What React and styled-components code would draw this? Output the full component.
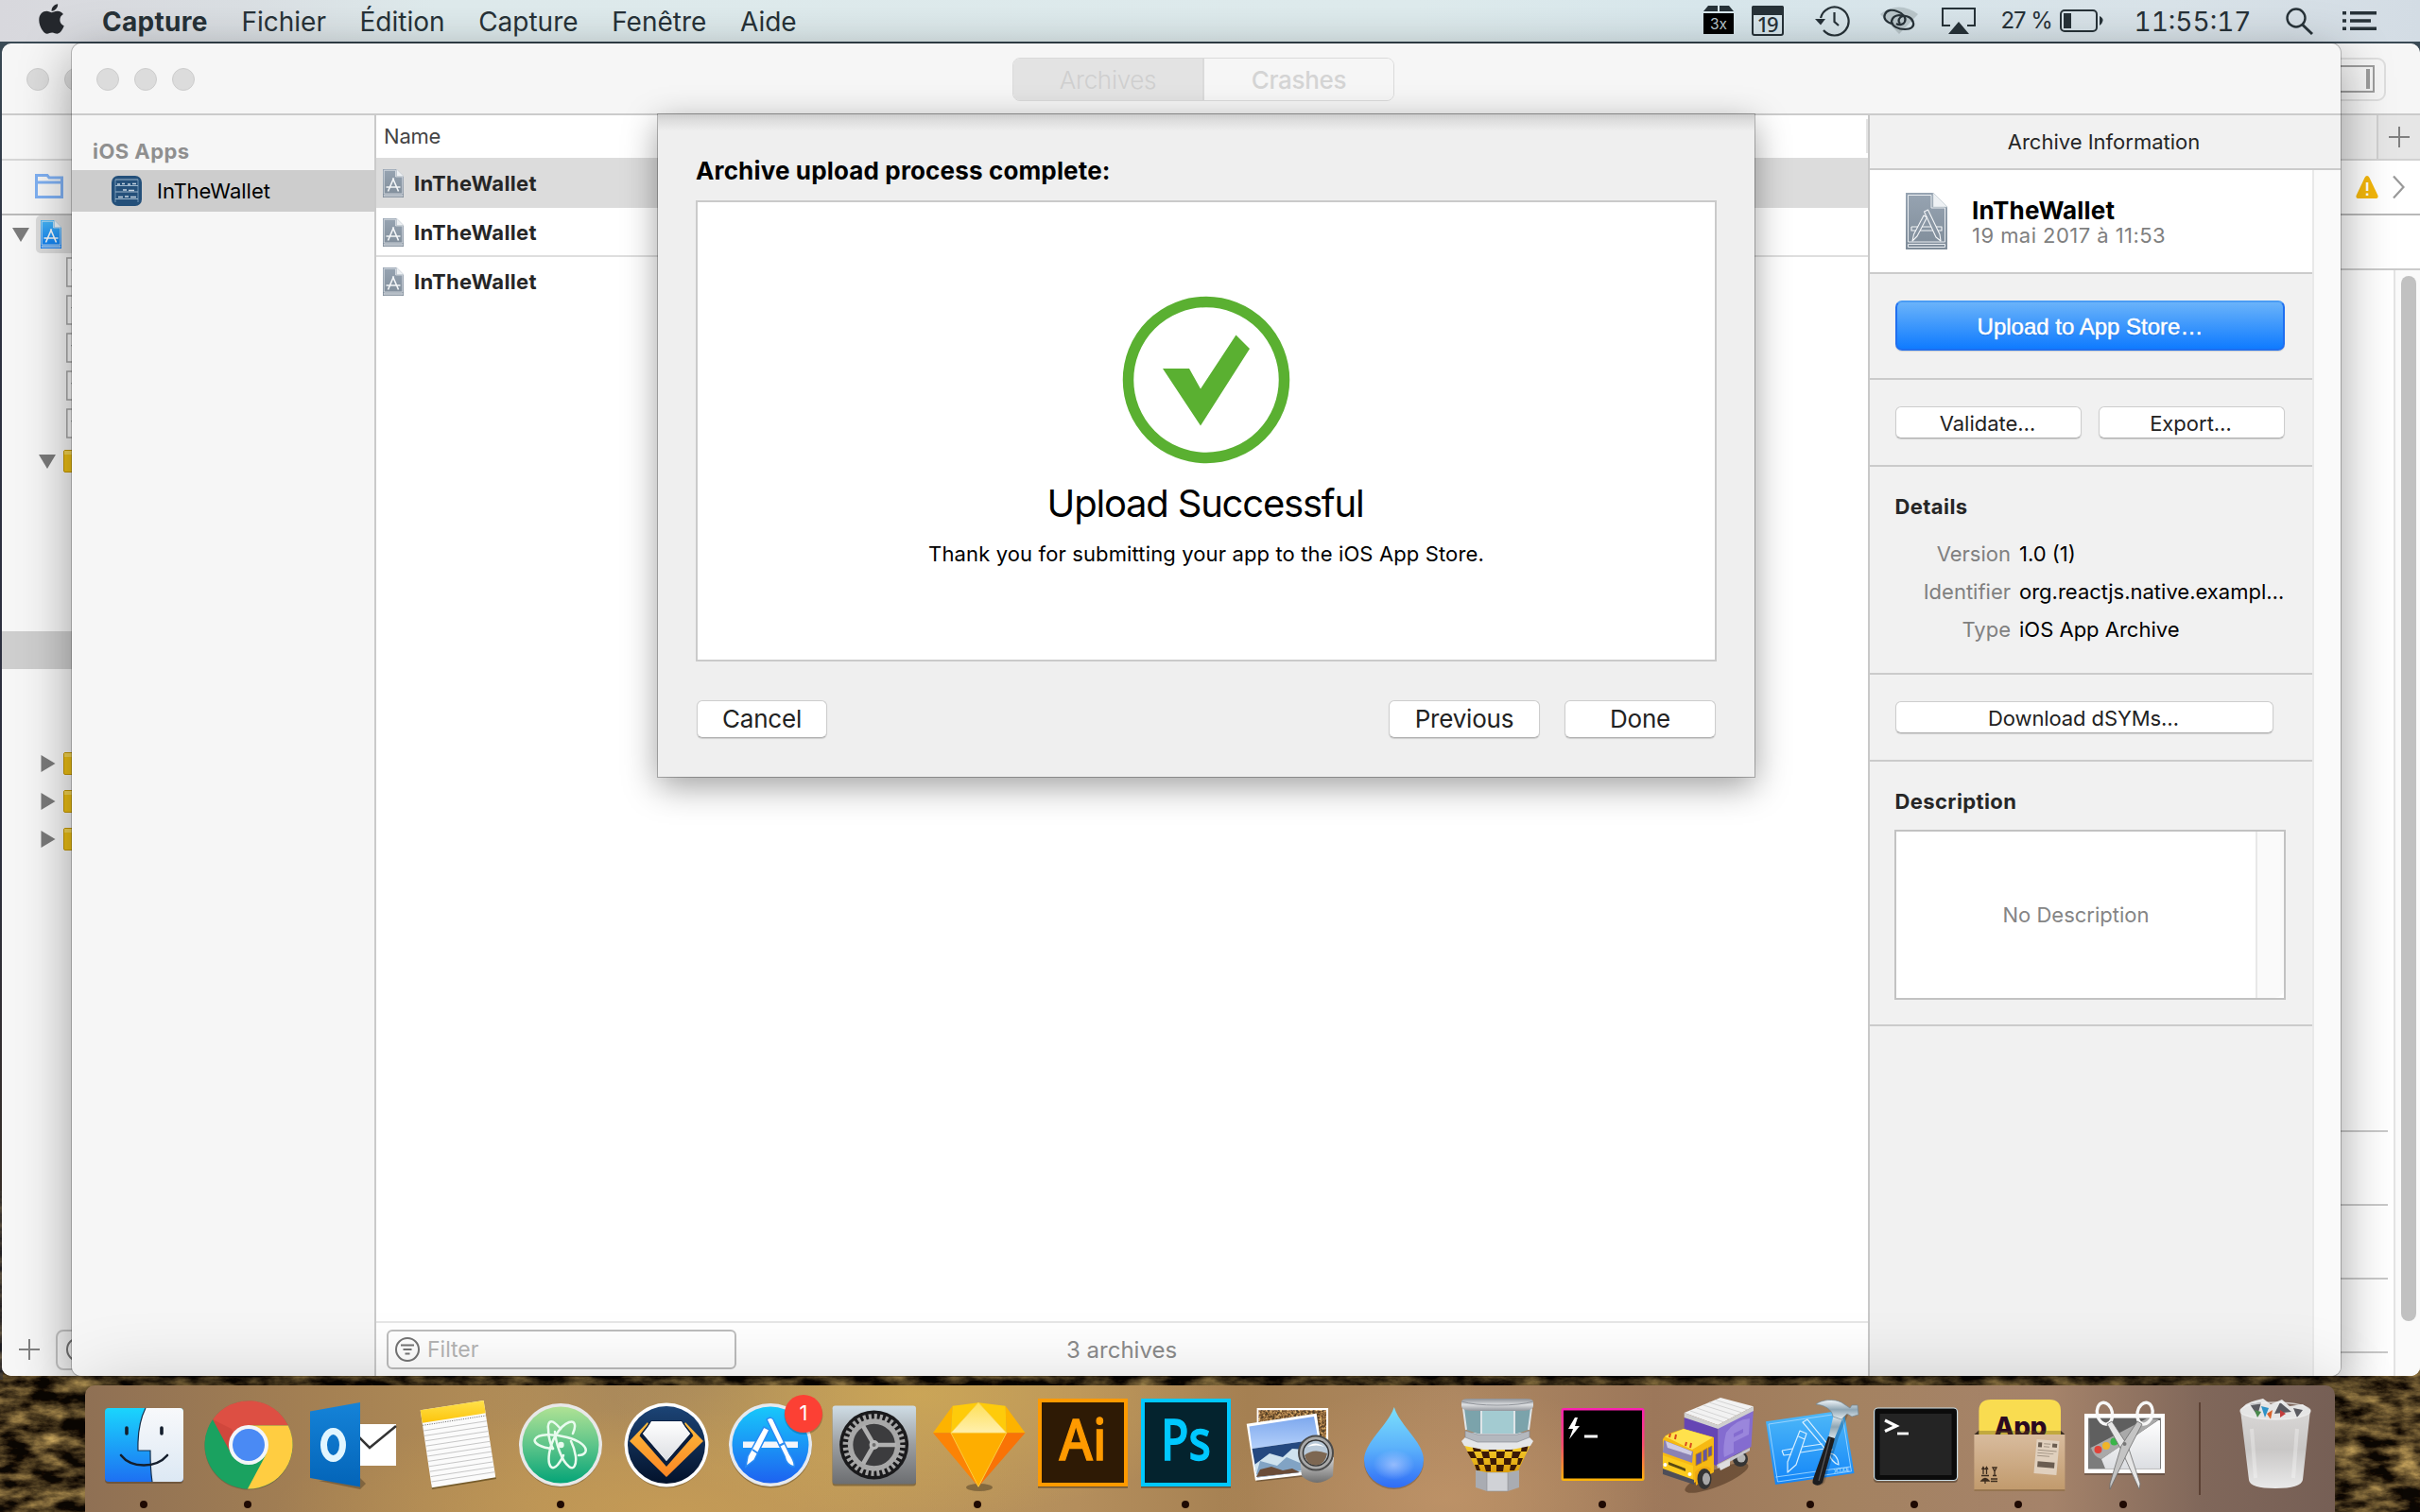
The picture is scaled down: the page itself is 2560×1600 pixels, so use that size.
import React from "react";
import styled, { createGlobalStyle, css } from "styled-components";
import { FaApple } from "react-icons/fa";

const Global = createGlobalStyle`
  html, body { margin: 0; padding: 0; overflow: hidden; }
  * { box-sizing: border-box; }
`;

const Desktop = styled.main`
  position: relative;
  width: 2560px;
  height: 1600px;
  overflow: hidden;
  background: linear-gradient(#3c4e58 0, #2c3040 300px, #2c2f3e 900px, #3a2c1e 1400px);
  font-family: Inter, "Liberation Sans", sans-serif;
  font-size: 22px;
  line-height: 1;
  color: #262626;
  white-space: nowrap;
`;

const Wallpaper = styled.svg`
  position: absolute;
  left: 0;
  top: 1260px;
`;

/* ---------- menu bar ---------- */

const MenuBar = styled.header`
  position: relative;
  display: flex;
  align-items: center;
  height: 44px;
  padding: 0 46px 0 41px;
  background: linear-gradient(90deg, #d8d8dd 0, #dadfe3 260px, #deeaec 460px, #deebed 1500px, #d8e7ec 1800px, #d9e3e9 2300px, #d3dce4 100%);
  color: #273238;
`;

const AppleIcon = styled(FaApple)`
  width: 27px;
  height: 36px;
  margin: -4px 40px 0 0;
  color: #25282d;
`;

const MenuItems = styled.nav`
  display: flex;
  gap: 35.6px;
  padding-top: 1px;
  font-size: 28px;
`;

const MenuItem = styled.span`
  font-weight: ${(p) => (p.$bold ? 700 : 400)};
  letter-spacing: ${(p) => (p.$bold ? "0.3px" : "0")};
`;

const StatusArea = styled.div`
  display: flex;
  align-items: center;
  margin-left: auto;
  height: 44px;
`;

const StatusSlot = styled.div`
  display: flex;
  align-items: center;
  width: ${(p) => p.$w}px;
  height: 44px;
  margin-left: ${(p) => p.$gap}px;
`;

const Battery = styled.span`
  font-size: 24px;
  letter-spacing: -1.1px;
`;

const Clock = styled.span`
  padding-top: 1px;
  font-size: 28px;
  font-feature-settings: "tnum";
  letter-spacing: 0;
`;

/* ---------- windows ---------- */

const Window = styled.section`
  position: absolute;
  display: flex;
  flex-direction: column;
  left: ${(p) => p.$x}px;
  top: 46px;
  width: ${(p) => p.$w}px;
  height: 1410px;
  border-radius: 10px;
  background: #f6f6f6;
  box-shadow: ${(p) => (p.$front ? "0 0 0 1px rgba(0,0,0,.22), 0 14px 54px rgba(0,0,0,.38)" : "none")};
  overflow: ${(p) => (p.$front ? "visible" : "hidden")};
`;

const TitleBar = styled.div`
  position: relative;
  flex: none;
  display: flex;
  align-items: center;
  height: 76px;
  padding: 2px 24px 0 26px;
  border-bottom: 2px solid #cbcbcb;
  background: #f6f6f6;
  border-radius: 10px 10px 0 0;
`;

const Lights = styled.div`
  display: flex;
  gap: 16px;
  width: 300px;
`;

const Light = styled.i`
  width: 24px;
  height: 24px;
  border-radius: 50%;
  background: #dcdcdc;
  border: 1px solid #cdcdcd;
`;

const Segmented = styled.div`
  display: flex;
  width: 404px;
  height: 46px;
  margin: 0 auto 0 669px;
  border: 1px solid #dadada;
  border-radius: 8px;
  overflow: hidden;
`;

const Segment = styled.div`
  flex: 1;
  display: flex;
  align-items: center;
  justify-content: center;
  padding-top: 2px;
  font-size: 26px;
  letter-spacing: -0.3px;
  font-weight: ${(p) => (p.$on ? 300 : 500)};
  color: ${(p) => (p.$on ? "#cfcfcf" : "#d4d4d4")};
  background: ${(p) => (p.$on ? "#e3e3e3" : "#f6f6f6")};
  border-right: ${(p) => (p.$on ? "2px solid #dadada" : "0")};
`;

const Body = styled.div`
  display: flex;
  flex: 1;
  min-height: 0;
`;

/* ---------- project window behind ---------- */

const Navigator = styled.div`
  width: 460px;
  display: flex;
  flex-direction: column;
  background: #f6f6f6;
`;

const NavTabs = styled.div`
  height: ${(p) => p.$h}px;
  border-bottom: 2px solid ${(p) => p.$line};
  padding: 14px 0 0 35px;
`;

const Tree = styled.div`
  flex: 1;
`;

const TreeRow = styled.div`
  display: flex;
  align-items: center;
  height: 40px;
  background: ${(p) => (p.$selected ? "#cecece" : "transparent")};
`;

const NavFooter = styled.div`
  display: flex;
  align-items: center;
  height: 56px;
  padding-left: 17px;
  gap: 16px;
`;

const FilterStub = styled.div`
  display: flex;
  align-items: center;
  width: 300px;
  height: 43px;
  padding-left: 8px;
  border: 2px solid #c4c4c4;
  border-radius: 8px;
`;

const Editor = styled.div`
  flex: 1;
  display: flex;
  flex-direction: column;
  background: #fff;
`;

const TabStrip = styled.div`
  display: flex;
  justify-content: flex-end;
  height: 48px;
  border-bottom: 2px solid #d2d2d2;
  background: #ececec;
`;

const AddTab = styled.div`
  display: flex;
  align-items: center;
  justify-content: center;
  width: 46px;
  border-left: 2px solid #d0d0d0;
  background: #e6e6e6;
`;

const JumpBar = styled.div`
  display: flex;
  align-items: center;
  justify-content: flex-end;
  gap: 15px;
  height: 58px;
  padding-right: 16px;
  border-bottom: 2px solid #b9b9b9;
`;

const SubBar = styled.div`
  height: 58px;
  border-bottom: 2px solid #cbcbcb;
`;

const EditorBody = styled.div`
  flex: 1;
  display: flex;
  min-height: 0;
`;

const EditorRows = styled.div`
  flex: 1;
  display: flex;
  flex-direction: column;
  margin-right: 6px;
  padding-top: 834px;
`;

const EditorRow = styled.div`
  height: 78px;
  border-bottom: 2px solid #c9c9c9;
`;

const Gutter = styled.div`
  width: 28px;
  padding: 6px 4px 58px 6px;
  border-left: 2px solid #e4e4e4;
  background: #fafafa;
`;

const Thumb = styled.div`
  height: 100%;
  border-radius: 8px;
  background: #c1c1c1;
`;

const PaneToggle = styled.div`
  display: flex;
  align-items: center;
  justify-content: flex-end;
  width: 160px;
  height: 46px;
  margin: 0 12px 0 auto;
  padding-right: 10px;
  border: 2px solid #dedede;
  border-radius: 9px;
`;

/* ---------- organizer ---------- */

const SourceList = styled.aside`
  width: 322px;
  padding-top: 27px;
  border-right: 2px solid #cacaca;
  border-bottom-left-radius: 10px;
  background: #f6f6f6;
`;

const SourceTitle = styled.div`
  padding: 0 0 9px 22px;
  font-weight: 700;
  letter-spacing: 0.45px;
  color: #8f8f8f;
`;

const SourceItem = styled.div`
  display: flex;
  align-items: center;
  gap: 16px;
  height: 44px;
  padding-left: 42px;
  background: #cdcdcd;
  color: #000;
`;

const List = styled.div`
  flex: 1;
  display: flex;
  flex-direction: column;
  background: #fff;
`;

const ListHeader = styled.div`
  display: flex;
  align-items: center;
  justify-content: space-between;
  height: 45px;
  padding: 0 0 1px 8px;
  color: #454545;
  letter-spacing: -0.2px;
  &::after {
    content: "";
    width: 2px;
    height: 36px;
    background: #e4e4e4;
  }
`;

const ListRow = styled.div`
  display: flex;
  align-items: center;
  gap: 11px;
  height: ${(p) => (p.$selected ? 53 : 52)}px;
  padding-top: ${(p) => (p.$line ? 2 : 0)}px;
  padding-left: 7px;
  font-weight: 700;
  letter-spacing: 0.35px;
  background: ${(p) => (p.$selected ? "#dcdcdc" : "#fff")};
  border-bottom: ${(p) => (p.$line ? "2px solid #dedede" : "0")};
`;

const ListFooter = styled.div`
  display: grid;
  grid-template-columns: 370px 1fr;
  align-items: center;
  height: 58px;
  margin-top: auto;
  padding-left: 11px;
  border-top: 2px solid #e6e6e6;
`;

const FilterField = styled.div`
  display: flex;
  align-items: center;
  gap: 7px;
  height: 42px;
  padding-left: 6px;
  border: 2px solid #bdbdbd;
  border-radius: 6px;
  font-size: 23px;
  color: #b5b5b5;
`;

const Count = styled.div`
  padding-left: 349px;
  padding-top: 1px;
  font-size: 24px;
  color: #8b8b8b;
`;

const Inspector = styled.aside`
  width: 500px;
  display: flex;
  flex-direction: column;
  border-left: 2px solid #c8c8c8;
  border-bottom-right-radius: 10px;
  background: #f1f1f1;
`;

const InspectorTitle = styled.div`
  display: flex;
  align-items: center;
  justify-content: center;
  height: 58px;
  padding-right: 3px;
  border-bottom: 2px solid #cbcbcb;
`;

const InspectorScroll = styled.div`
  flex: 1;
  display: flex;
`;

const Sections = styled.div`
  flex: 1;
`;

const Track = styled.div`
  width: 30px;
  border-left: 2px solid #e8e8e8;
  border-bottom-right-radius: 10px;
  background: #fafafa;
`;

const Section = styled.div`
  height: ${(p) => p.$h}px;
  padding: ${(p) => p.$pt}px 29px 0 27px;
  border-bottom: 2px solid #cbcbcb;
`;

const ArchiveCard = styled.div`
  display: flex;
  align-items: center;
  gap: 26px;
  height: 110px;
  padding-left: 38px;
  border-bottom: 2px solid #cbcbcb;
  background: #fff;
`;

const ArchiveName = styled.div`
  padding-top: 2px;
  font-size: 26px;
  font-weight: 700;
  letter-spacing: 0.2px;
  color: #000;
`;

const ArchiveDate = styled.div`
  margin-top: 2px;
  letter-spacing: 0.45px;
  color: #7f7f7f;
`;

const buttonFace = css`
  display: flex;
  align-items: center;
  justify-content: center;
  border-radius: 6px;
  border: 1px solid #cdcdcd;
  border-bottom-color: #b0b0b0;
  background: #fff;
  box-shadow: 0 1px 1px rgba(0, 0, 0, 0.14);
  color: #222;
`;

const UploadButton = styled.div`
  ${buttonFace}
  height: 53px;
  padding-top: 2px;
  border-radius: 7px;
  border: 2px solid #1f6ff0;
  border-top-color: #4a9cf4;
  background: linear-gradient(#6ab3fa, #0f7bff);
  font: 24px "Liberation Sans", sans-serif;
  -webkit-text-stroke: 0.5px #fff;
  color: #fff;
  text-shadow: 0 1px 1px rgba(0, 60, 160, 0.4);
`;

const ButtonRow = styled.div`
  display: grid;
  grid-template-columns: 1fr 1fr;
  gap: 18px;
`;

const SmallButton = styled.div`
  ${buttonFace}
  height: 34px;
  padding: 1px 2px 0 0;
  letter-spacing: ${(p) => p.$ls || 0}px;
  margin-right: ${(p) => (p.$inset ? 12 : 0)}px;
`;

const Heading = styled.div`
  font-weight: 700;
  letter-spacing: 0.4px;
  text-indent: -0.5px;
`;

const Details = styled.dl`
  display: grid;
  grid-template-columns: 122px 1fr;
  column-gap: 9px;
  row-gap: 18px;
  margin: 28px 0 0;
`;

const Term = styled.dt`
  text-align: right;
  color: #808080;
`;

const Value = styled.dd`
  margin: 0;
  color: #000;
`;

const DescriptionBox = styled.div`
  display: flex;
  height: 180px;
  margin: 19px -1px 0 -1px;
  border: 2px solid #c2c2c2;
  background: #fff;
  color: #858585;
`;

const DescriptionText = styled.div`
  flex: 1;
  display: flex;
  align-items: center;
  justify-content: center;
`;

/* ---------- sheet ---------- */

const Sheet = styled.div`
  position: absolute;
  left: 620px;
  top: 75px;
  display: flex;
  flex-direction: column;
  width: 1160px;
  height: 701px;
  padding: 47px 40px 0;
  background: linear-gradient(#cdcdcd, #dedede 7px, #efefef 18px, #efefef);
  box-shadow: 0 0 0 1px rgba(0, 0, 0, 0.26), 0 10px 34px rgba(0, 0, 0, 0.38);
`;

const SheetTitle = styled.div`
  font-size: 26px;
  font-weight: 700;
  letter-spacing: 0.15px;
  color: #000;
`;

const ResultPane = styled.div`
  display: flex;
  flex-direction: column;
  align-items: center;
  height: 488px;
  margin-top: 18px;
  padding-top: 99px;
  border: 2px solid #cacaca;
  background: #fff;
  color: #000;
`;

const ResultTitle = styled.div`
  margin-top: 22px;
  padding-right: 2px;
  font-size: 40px;
  letter-spacing: -1.2px;
`;

const ResultText = styled.div`
  margin-top: 22px;
  letter-spacing: 0.13px;
`;

const SheetButtons = styled.div`
  display: flex;
  gap: 26px;
  margin-top: 41px;
  padding-right: 1px;
`;

const SheetButton = styled.div`
  ${buttonFace}
  width: ${(p) => p.$w}px;
  height: 40px;
  margin-right: ${(p) => (p.$lead ? "auto" : "0")};
  margin-left: ${(p) => (p.$lead ? "1px" : "0")};
  font-size: 26px;
  letter-spacing: -0.2px;
`;

/* ---------- dock ---------- */

const DockBar = styled.footer`
  position: absolute;
  left: 90px;
  top: 1466px;
  display: flex;
  width: 2380px;
  height: 134px;
  padding-left: 7px;
  border-radius: 10px 10px 0 0;
  background:
    radial-gradient(ellipse 320px 130px at 880px 10px, rgba(208, 170, 86, 0.8), rgba(208, 170, 86, 0)),
    radial-gradient(ellipse 420px 110px at 620px 134px, rgba(202, 158, 84, 0.7), rgba(202, 158, 84, 0)),
    radial-gradient(ellipse 260px 90px at 660px 0, rgba(160, 130, 92, 0.8), rgba(160, 130, 92, 0)),
    radial-gradient(ellipse 240px 120px at 1440px 120px, rgba(192, 148, 104, 0.8), rgba(192, 148, 104, 0)),
    linear-gradient(90deg, #8f7054 0, #a58153 260px, #b48f57 480px, #b8955c 800px, #b48e5c 1050px, #a58052 1230px, #ad8761 1450px, #9c775a 1660px, #a48260 1850px, #a5836a 2080px, #80675a 2240px, #765f55 100%);
  box-shadow: 0 0 80px rgba(0, 0, 0, 0.19);
`;

const DockIcon = styled.svg`
  flex: none;
  width: 110.2px;
  height: 134px;
  overflow: visible;
`;

const Divider = styled.div`
  width: 2px;
  height: 98px;
  margin: 18px 24px 0 25px;
  background: rgba(70, 45, 32, 0.65);
`;

/* ---------- small drawings ---------- */

function CompassA({ c = "#fff", w = 1.4 }) {
  return (
    <g fill="none" stroke={c} strokeWidth={w} strokeLinejoin="round">
      <path d="M-2.5 -14 L1.5 -16 L14 10 L15 17 L10 13 Z" />
      <path d="M-3 -10 L0.5 -8 L-10 12 L-15 17 L-13.5 10 Z" />
      <path d="M-16 2 H-9 M-5 2 H5 M10 2 H16 V6 H12 M7 6 H-7 M-11 6 H-16 V2" />
    </g>
  );
}

function SmallA() {
  return (
    <path d="M-1 -15L11 13M1 -15L-11 13M-15 4H15" fill="none" stroke="#f4f6f8" strokeWidth="3.2" />
  );
}

function ArchiveDoc({ w, h, top = "#97a4b2", bottom = "#7f8c99", fine, id }) {
  return (
    <svg width={w} height={h} viewBox="0 0 44 60">
      <defs>
        <linearGradient id={id} x1="0" y1="0" x2="0" y2="1">
          <stop offset="0" stopColor={top} />
          <stop offset="1" stopColor={bottom} />
        </linearGradient>
      </defs>
      <path d="M0 0H29L44 15V60H0Z" fill={`url(#${id})`} />
      <path d="M2.5 2.5H27V16H41.5V52H2.5Z M2.5 54.5H41.5V57.5H2.5Z" fill="none" stroke="#e9edf1" strokeWidth={fine ? 1 : 1.4} />
      <path d="M29 0L44 15H29Z" fill="#eef1f4" stroke="#c4ccd4" strokeWidth="0.6" />
      <g transform="translate(22 34)">
        {fine ? <CompassA c="#f4f6f8" w={1.1} /> : <SmallA />}
      </g>
    </svg>
  );
}

function FilterGlyph({ c = "#757575" }) {
  return (
    <svg width="28" height="28" viewBox="0 0 28 28" fill="none" stroke={c} strokeWidth="2">
      <circle cx="14" cy="14" r="12" />
      <path d="M7 9.5H21M9.5 14H18.5M11.5 18.5H16.5" />
    </svg>
  );
}

function ShelfIcon() {
  return (
    <svg width="32" height="32" viewBox="0 0 32 32">
      <rect width="32" height="32" rx="7" fill="#24507a" />
      <path d="M4 4V28M28 4V28" stroke="#6f93b3" strokeWidth="1" />
      <path d="M4 10.5H28M4 17H28M4 24.5H28M4 4H28" stroke="#9db6cb" strokeWidth="1" />
      <path d="M6 9H9M11 8.5H14M17 9H20M22 8.5H26M12 15H16M18 15.5H24M7 22.5H12M14 22H18M20 22.5H26" stroke="#c5d4e1" strokeWidth="1.6" />
    </svg>
  );
}

const Plus = () => (
  <svg width="24" height="24" viewBox="0 0 24 24" stroke="#808080" strokeWidth="2">
    <path d="M12 1V23M1 12H23" />
  </svg>
);

const Fold = styled.svg`
  width: ${(p) => (p.$ml ? 18 : 16)}px;
  height: 20px;
  margin-left: ${(p) => p.$ml || 41}px;
`;

const TriDown = ({ ml }) => (
  <Fold $ml={ml} viewBox="0 0 18 20">
    <path d="M0 3H18L9 18Z" fill="#7b7b7b" />
  </Fold>
);
const TriRight = () => (
  <Fold viewBox="0 0 16 20">
    <path d="M0.5 1V19L15.5 10Z" fill="#7b7b7b" />
  </Fold>
);

const FolderSvg = styled.svg`
  margin-left: ${(p) => p.$ml}px;
`;
const Folder = ({ ml }) => (
  <FolderSvg $ml={ml} width="30" height="24" viewBox="0 0 30 24">
    <rect x="0.5" y="0.5" width="29" height="23" rx="1.5" fill="#ecbf14" stroke="#c49600" />
    <path d="M1 1H29V5H1Z" fill="#f3d452" />
  </FolderSvg>
);
const FileStub = () => (
  <FolderSvg $ml={68} width="26" height="32" viewBox="0 0 26 32">
    <path d="M0.8 1H24V31H0.8Z" fill="#fafafa" stroke="#a5a5a5" strokeWidth="1.5" />
    <path d="M5 13H10V22Z" fill="#8d9494" />
  </FolderSvg>
);

const ProjectBadge = styled.div`
  display: flex;
  align-items: center;
  width: 300px;
  height: 40px;
  margin-left: 7px;
  padding-left: 5px;
  border-radius: 5px;
  background: #dadada;
`;

/* ---------- dock drawings ---------- */

const Dot = () => <circle cx="55" cy="126" r="4" fill="#1f0a03" />;

const Finder = () => (
  <g>
    <rect x="14" y="25" width="83" height="79" rx="4" fill="#000" opacity=".25" />
    <rect x="14" y="24" width="83" height="78" rx="4" fill="url(#finder)" />
    <path d="M57 24H93Q97 24 97 28V98Q97 102 93 102H64C62.500 92 62 80 62 69H49C48.500 52 51 36 57 24Z" fill="url(#finderR)" />
    <path d="M57 24C51 36 48.500 52 49 69H62C62 80 62.500 92 64 102" fill="none" stroke="#14304e" strokeWidth="1.2" />
    <path d="M37 45V51M74 45V51" stroke="#141e2c" strokeWidth="3.600" strokeLinecap="round" />
    <path d="M31 74C42 88 68 88 80 74" fill="none" stroke="#141e2c" strokeWidth="2.600" strokeLinecap="round" />
  </g>
);

const Chrome = () => (
  <g>
    <circle cx="56" cy="64" r="46.500" fill="#000" opacity=".2" />
    <circle cx="56" cy="63" r="46.500" fill="#1aa260" />
    <path d="M18 36A46.500 46.500 0 0 1 98 42.500H56L38 73Z" fill="#dd4f43" />
    <path d="M56 42.500H97.800A46.500 46.500 0 0 1 55 109.500L74.500 73Z" fill="#ffcd41" />
    <path d="M18 36L36 70L40 52L38 46Z" fill="#b83a30" opacity=".35" />
    <circle cx="56" cy="63" r="21" fill="#f4f6f8" />
    <circle cx="56" cy="63" r="17" fill="#4a8af4" />
  </g>
);

const Outlook = () => (
  <g>
    <path d="M20 101L64 110L70 104L64 98Z" fill="#000" opacity=".25" />
    <rect x="60" y="41" width="42" height="44" fill="#fff" />
    <path d="M63 55L74 66L102 43" fill="none" stroke="#333" strokeWidth="2.500" />
    <path d="M11 27.500L64 18V107.500L11 98Z" fill="url(#outlook)" />
    <ellipse cx="35.500" cy="63" rx="10" ry="14.500" fill="none" stroke="#e2f6ff" strokeWidth="7" />
  </g>
);

const Notes = () => (
  <g>
    <path d="M29 110L97 99L96 95L28 104Z" fill="#4b3a10" opacity=".6" />
    <path d="M16.700 26.300L83.600 16L96.300 97.300L28.800 108.300Z" fill="#fbfbfb" />
    <path d="M16.700 26.300L83.600 16L85.700 29.300L18.800 39.800Z" fill="url(#note)" />
    <path d="M19.200 42.300L86 32" stroke="#777" strokeWidth="1" strokeDasharray="1.200 1.200" />
    {[0, 1, 2, 3, 4, 5, 6, 7, 8, 9, 10].map((i) => (
      <path key={i} d={`M${20.200 + i * 0.82} ${48 + i * 5.400}L${87 + i * 0.82} ${37.700 + i * 5.400}`} stroke="#c6c6c6" strokeWidth="1" />
    ))}
  </g>
);

const Atom = () => (
  <g>
    <circle cx="55" cy="64.500" r="43.500" fill="#000" opacity=".25" />
    <circle cx="55" cy="63" r="44" fill="#e8e8e8" />
    <circle cx="55" cy="63" r="40.500" fill="url(#atom)" />
    <g fill="none" stroke="#e9fbef" strokeWidth="2.500" strokeLinecap="round">
      <path d="M47 67C34 66 26 61 28 57C31 51 48 51 62 55C77 59 84 66 81 71C79 74 76 74 74 74" />
      <path d="M49 49C50 61 56 80 64 86C69 90 72 84 71 75C70 68 68 63 66 59" />
      <path d="M68 51C72 42 70 37 64 39C54 43 45 58 43 72C41 86 46 91 52 84C55 80 57 77 58 74" />
      <path d="M42 46C41 40 44 36 49 40C51 41 53 44 55 46M42 46C42 54 44 62 47 67" />
    </g>
    <circle cx="55.500" cy="63" r="3.200" fill="#e9fbef" />
  </g>
);

const Toolbox = () => (
  <g>
    <circle cx="57" cy="64.500" r="44" fill="#000" opacity=".25" />
    <circle cx="57" cy="63" r="44.500" fill="#fff" />
    <circle cx="57" cy="63" r="41" fill="url(#navy)" />
    <path d="M37 39L18 59L57 97L96 59L77 39L57 85Z" fill="url(#orangeV)" />
    <path d="M41 38H73L84 52L57 83L30 52Z" fill="#f3f4f6" stroke="#0a1d3c" strokeWidth="1.500" />
    <path d="M30 52L57 83L84 52" fill="none" stroke="#0a1d3c" strokeWidth="4" />
    <path d="M41 38H73L81 52L57 80L33 52Z" fill="url(#silver)" />
  </g>
);

const AppStore = () => (
  <g>
    <circle cx="57" cy="64.500" r="44" fill="#000" opacity=".25" />
    <circle cx="57" cy="63" r="44" fill="#e6e9ee" />
    <circle cx="57" cy="63" r="40.500" fill="url(#store)" />
    <path d="M28 59.500H86V66H28Z" fill="#f4f6fa" />
    <path d="M53 36C56 33 60 34 61 38L77 72C81 78 83 82 82 86C76 85 73 80 72 75Z" fill="#fff" stroke="#2a8cf4" strokeWidth="1.500" />
    <path d="M50 44L56 47L40 79L31 86L33 75Z" fill="#fff" stroke="#2a8cf4" strokeWidth="1.500" />
    <path d="M66 64L72 61M38 68L44 72" stroke="#2a8cf4" strokeWidth="2" />
    <circle cx="92" cy="31.500" r="20.500" fill="#000" opacity=".2" />
    <circle cx="92" cy="30" r="20" fill="#fc4034" />
    <text x="92" y="37.500" textAnchor="middle" fontFamily="Inter" fontSize="22" fill="#fff">1</text>
  </g>
);

const Prefs = () => (
  <g>
    <rect x="12.600" y="23" width="88.400" height="83.500" rx="3" fill="#000" opacity=".3" />
    <rect x="12.600" y="21.500" width="88.400" height="83" rx="3" fill="url(#prefs)" />
    <circle cx="56.600" cy="63" r="36.500" fill="#1a1a1c" />
    <circle cx="56.600" cy="63" r="30" fill="none" stroke="#a6a6a6" strokeWidth="6" strokeDasharray="3 2.890" />
    <circle cx="56.600" cy="63" r="25" fill="#3c3c3e" stroke="#a8a8a8" strokeWidth="5.500" />
    <path d="M56.600 63H80M56.600 63L45 43M56.600 63L45 83" stroke="#b0b0b0" strokeWidth="4.500" />
    <circle cx="56.600" cy="63" r="5" fill="#b9b9b9" />
    <circle cx="56.600" cy="63" r="2" fill="#6d6d6d" />
  </g>
);

const Sketch = () => (
  <g strokeLinejoin="round">
    <ellipse cx="57" cy="108" rx="14" ry="4" fill="#000" opacity=".3" />
    <path d="M8 50.300L28.700 21.700L27 50.300Z" fill="#fdb300" />
    <path d="M105.500 50.300L84.600 21.700L85.700 50.300Z" fill="#fdb300" />
    <path d="M28.700 21.700L56 18.300L27 50.300Z" fill="#fecb0a" />
    <path d="M84.600 21.700L56 18.300L85.700 50.300Z" fill="#fecb0a" />
    <path d="M56 18.300L27 50.300H85.700Z" fill="url(#facet)" />
    <path d="M8 50.300H27L56 107.300Z" fill="#fc8305" />
    <path d="M105.500 50.300H85.700L56 107.300Z" fill="#f97306" />
    <path d="M27 50.300H85.700L56 107.300Z" fill="#feae00" />
    <path d="M27 50.300L56 107.300L85.700 50.300ZM56 18.300L27 50.300M56 18.300L85.700 50.300" fill="none" stroke="#ffd84a" strokeWidth=".8" />
  </g>
);

const Adobe = ({ x, label, c, bg }) => (
  <g>
    <rect x={x} y="16" width="95" height="92.500" fill="#000" opacity=".4" />
    <rect x={x} y="14" width="95" height="93" fill={c} />
    <rect x={x + 4} y="18" width="87" height="85" fill={bg} />
    <text x={x + 47.500} y="79" textAnchor="middle" fontFamily="Noto Sans" fontWeight="500" fontSize="60" textLength={label === "Ai" ? 50 : 53} lengthAdjust="spacingAndGlyphs" fill={c} stroke={c} strokeWidth="1.3">{label}</text>
  </g>
);

const Preview = () => (
  <g>
    <rect x="20.600" y="24" width="75.500" height="48" fill="#fff" />
    <rect x="23" y="26.500" width="71" height="45" fill="#a58a55" />
    <rect x="23" y="26.500" width="71" height="45" filter="url(#sand)" opacity=".5" />
    <path d="M11 42L85 31L94 94L20.500 102Z" fill="#000" opacity=".3" />
    <path d="M9.700 40.700L83.700 29.700L93 92.300L19 100.700Z" fill="#fff" />
    <path d="M12.500 43.500L81 33L85.500 57L15.500 67Z" fill="url(#sky)" />
    <path d="M15.500 67L85.500 57L90 89L21 97.500Z" fill="#24487f" />
    <path d="M18 84L34 72L48 76L58 67L87 69L90 89L21 97.500Z" fill="#cfe2ee" />
    <path d="M24 80L42 85L52 76L66 82L80 72L88 84L60 92L20 94Z" fill="#4d7aa8" opacity=".6" />
    <path d="M20 97L24 89L36 86L48 90L58 88L66 92Z" fill="#6a4c38" />
    <path d="M66 76L68 96Q84 110 101 96L102 76Z" fill="url(#loupe)" />
    <circle cx="83" cy="71.500" r="18" fill="#a9a9a9" stroke="#4b4b4b" strokeWidth="2" />
    <circle cx="83" cy="71.500" r="13.500" fill="#b9c9d8" stroke="#333" strokeWidth="1.500" />
    <path d="M71 74Q80 66 95 72Q93 84 83 84.500Q73 84 71 74Z" fill="#7d6752" />
    <path d="M74 65Q82 58 92 65Q84 62 74 65Z" fill="#fff" />
  </g>
);

const Drop = () => (
  <g>
    <path d="M55.800 25C62 45 87 62 87 81A31.500 29 0 0 1 24 81C24 62 49 45 55.800 25Z" fill="#000" opacity=".2" />
    <path d="M55.800 23C62 43 87 60 87 79A31.500 29.500 0 0 1 24 79C24 60 49 43 55.800 23Z" fill="url(#drop)" />
    <ellipse cx="55.500" cy="84" rx="22" ry="16" fill="url(#glow)" />
  </g>
);

const Tower = () => (
  <g>
    <path d="M32 90H78V108L66 112H44L32 108Z" fill="#a9acb2" />
    <path d="M44 92H66V112H44Z" fill="#d0d2d6" stroke="#8d8f94" strokeWidth=".6" />
    <path d="M20 63L90 63L77 90L66 92H44L33 90Z" fill="url(#check)" />
    <g fill="#3b1a06">
      <path d="M28 63H36L38 70H30ZM45 63H54V70H46ZM63 63H72L71 70H63ZM81 63H88L86 70H80Z" />
      <path d="M23 70H30L33 77H27ZM38 70H46L47 77H40ZM54 70H63L62 77H54ZM71 70H80L77 77H70Z" />
      <path d="M33 77H40L41 84H35ZM47 77H54V84H48ZM62 77H70L69 84H62ZM77 77H82L79 84H76Z" />
      <path d="M31 84H35L37 90H33ZM41 84H48V91H43ZM54 84H62L61 91H54ZM69 84H76L73 90H68Z" />
    </g>
    <path d="M17 59L26 50H84L93 59L90 64L70 68H40L20 64Z" fill="#e4e6e9" />
    <path d="M21 48L34 52H76L89 48V55L76 60H34L21 55Z" fill="#b4b8be" stroke="#7f858d" strokeWidth=".6" />
    <path d="M19 24H91L88 47L76 51H34L22 47Z" fill="#7ba3ab" />
    <path d="M38 25H73V51H38Z" fill="#a3cbd1" />
    <path d="M19 24L22 47M38 25V51M73 25V51M91 24L88 47" stroke="#dfe5e8" strokeWidth="2" />
    <path d="M17 18Q17 14 24 14H86Q93 14 93 18V22Q93 26 84 27H26Q17 26 17 22Z" fill="url(#cap)" />
    <path d="M17 17Q30 21 55 21T93 17" fill="none" stroke="#8e9298" strokeWidth="1" />
  </g>
);

const Hyper = () => (
  <g>
    <rect x="11.500" y="24" width="88" height="77" rx="2.500" fill="url(#hyper)" />
    <rect x="14" y="26.500" width="83" height="72" fill="#000" />
    <path d="M26 34L19 46H24L20 57L31 43H26L29 34Z" fill="#fff" />
    <rect x="36" y="52.500" width="14" height="3" fill="#fff" />
  </g>
);

const Truck = () => (
  <g>
    <ellipse cx="66" cy="98" rx="36" ry="9" transform="rotate(-22 66 98)" fill="#2a1608" opacity=".4" />
    <circle cx="91" cy="78" r="8" fill="#343434" />
    <circle cx="92" cy="77" r="4.500" fill="#b5b5b5" />
    <path d="M31.700 34L67.300 44V86L31.700 66Z" fill="#6545b4" />
    <path d="M67.300 44L105 24L102.500 65L67.300 83Z" fill="#846cd0" />
    <path d="M76 50Q86 36 101 35L100 52L84 60V71L74 76Q72 66 76 50Z" fill="#9a86dc" />
    <path d="M84 51L94 46V50L84 55Z" fill="#846cd0" />
    <path d="M31.700 29L70 13L105 22.300L67.300 42Z" fill="#f2f2f2" />
    <path d="M31.700 29L67.300 42V46L31.700 34ZM67.300 42L105 22.300V27L67.300 46Z" fill="#cfcfcf" />
    <path d="M38 27L74 39M45 24L80 36M52 21L87 32M58 18L93 29M65 15.500L99 26" stroke="#d4d4d4" strokeWidth="1" />
    <path d="M66 84L101 66V69L67 88Z" fill="#c6c6cc" />
    <path d="M68 84L80 78V85L70 90Z" fill="#dedede" />
    <path d="M9 57Q11 53 16 51L31 46L63 55V92L42 103L9 89Z" fill="#f6b913" />
    <path d="M11 54L31 46L62 55L40 68Z" fill="#ffe14c" />
    <path d="M10 58L41 70L40 82L9 71Z" fill="#8b82b4" />
    <path d="M12 59L40 70L39 74L14 66Z" fill="#cfcbe2" />
    <path d="M44 73L50 70V82L44 85ZM51.500 69L56 66.500V79L51.500 81ZM57 66L61 64V74L57 76Z" fill="#6556a0" stroke="#c98b08" strokeWidth=".8" />
    <path d="M9 74L41 85V102L9 89Z" fill="#fcca1d" />
    <path d="M15 81L33 88V91L15 84Z" fill="#5a4a12" />
    <circle cx="11.500" cy="84" r="2" fill="#fff" /><circle cx="37.500" cy="94" r="2" fill="#fff" />
    <path d="M9 88L42 100V105L9 94Z" fill="#4e4e58" />
    <path d="M43 92Q52 82 60 88L58 96L44 106Z" fill="#f0aa10" />
    <ellipse cx="53" cy="99" rx="7.500" ry="11" fill="#343434" />
    <ellipse cx="55" cy="99" rx="4" ry="6.500" fill="#a8a8a8" />
    <path d="M16 55L17 51M22 57L23 52M33 64L34 60M38 66L39 61" stroke="#d8481c" strokeWidth="2" />
  </g>
);

const Xcode = () => (
  <g>
    <path d="M8 38.300L90.500 26.300L101.500 93L18 105Z" fill="url(#xcode)" />
    <path d="M11 41L88.500 29.500L98.500 91L20.500 102Z" fill="none" stroke="#9fd6ff" strokeWidth=".9" />
    <path d="M18.500 97L98 86" stroke="#9fd6ff" strokeWidth=".9" />
    <text x="80" y="93" transform="rotate(-8 80 93)" fontFamily="Inter" fontSize="6" textLength="17" fill="#bfe3ff">XCODE</text>
    <g fill="none" stroke="#d7efff" strokeWidth="1.200" strokeLinejoin="round">
      <path d="M47 39L52 36L78 68L74 71Z" />
      <path d="M44 48L51 51L40 84L31 92V81Z M42.500 54L49 57" />
      <path d="M25 69L36 67M47 65L68 62M25 69L27 74L35 73M45 71L70 67" />
      <path d="M75 72Q84 72 85 84Q77 81 75 72Z" />
    </g>
    <path d="M80 50L89 29L95 31L85 55L70 103Q66 108 60 105Q57 103 59 99Z" fill="#000" opacity=".2" />
    <path d="M80 30L90 33L80 58L74 56Z" fill="url(#steel)" />
    <path d="M74 54L81 56L68 103Q63 108 58 104Q57 103 58 99Z" fill="#1d1d1f" />
    <path d="M76 56L64 101" stroke="#5a5a5c" strokeWidth="1.200" />
    <path d="M61 20C67 15 80 14 88 18L97 24L99 21H105L106 31L99 33L94 30L88 36L79 33C78 25 70 21 61 20Z" fill="url(#steel)" stroke="#6f8593" strokeWidth=".7" />
  </g>
);

const Terminal = () => (
  <g>
    <rect x="12" y="25" width="89" height="78" rx="4" fill="#000" opacity=".3" />
    <rect x="12.600" y="24" width="88" height="76.500" rx="4" fill="#0b0b0b" stroke="#c9dce4" strokeWidth="1.200" />
    <rect x="18.600" y="30" width="76" height="65" fill="#242424" />
    <path d="M24 37L36 43L24 48.500" fill="none" stroke="#fff" strokeWidth="3.200" />
    <path d="M37 51H49" stroke="#fff" strokeWidth="2.800" />
  </g>
);

const AppBox = () => (
  <g>
    <path d="M8.400 52L14 47H99L104.400 52Z" fill="#3b2d22" />
    <path d="M13.400 54V27Q13.400 15 26 15H88Q100 15 100 27V54Z" fill="#f9dc50" />
    <text x="57" y="54" textAnchor="middle" fontFamily="Inter" fontWeight="800" fontSize="28" letterSpacing="-0.5" fill="#2b0820">App</text>
    <path d="M13.400 48H100V53H13.400Z" fill="#5d4a1e" opacity=".35" />
    <rect x="8.400" y="52" width="96" height="59.500" fill="url(#carton)" />
    <path d="M8.400 111H104.400" stroke="#8b6b48" strokeWidth="1.500" />
    <g transform="rotate(5 85 76)">
      <rect x="73" y="58" width="24" height="36" fill="#e0d0be" />
      <path d="M75 61H79V66H75ZM90 61H95V65H90Z" fill="#6b5d50" />
      <path d="M81 62H88M81 65H87M75 69H95M75 72H92M75 75H88" stroke="#a29484" strokeWidth="1" />
      <rect x="76" y="81" width="18" height="6" fill="#6b5d50" />
    </g>
    <g stroke="#3c2c1e" strokeWidth="1.300" fill="none">
      <path d="M18 87V94M21.500 87V94M16 95.500H24M16.500 89L18 86.500L19.500 89M20 89L21.500 86.500L23 89" />
      <path d="M28 87H32L30 91ZM30 91V95M28 95.500H32M26 99H33M26 101.500H33M20 100V104" />
      <path d="M16 101Q20 96 24 101Z" fill="#3c2c1e" />
    </g>
  </g>
);

const Grab = () => (
  <g>
    <rect x="14" y="31" width="85" height="64" fill="#000" opacity=".25" />
    <rect x="14" y="30" width="85" height="63" fill="#fff" />
    <rect x="18" y="34.500" width="77" height="54" fill="#7c7c7c" />
    <path d="M19 35H94V37L20 66Z" fill="#5f5f5f" />
    <path d="M32 78L92 37H94V88H36Z" fill="url(#silver)" />
    <path d="M21 66L80 35L93 36L32 78Q24 76 21 66Z" fill="#a9a9a9" />
    <circle cx="28.500" cy="68" r="4" fill="#e04238" /><circle cx="37" cy="64" r="4" fill="#f0b428" /><circle cx="45.500" cy="59.500" r="4" fill="#3ab54a" />
    <g fill="none" stroke="#f7f7f7" strokeWidth="3.400">
      <ellipse cx="35.500" cy="29.700" rx="8" ry="11.500" transform="rotate(-12 35.500 29.700)" />
      <ellipse cx="78" cy="29.700" rx="8" ry="11.500" transform="rotate(12 78 29.700)" />
    </g>
    <path d="M38 41L43 38L60 64L73 104L72 110L53 68Z" fill="#e6e6e6" stroke="#6d6d6d" strokeWidth=".8" />
    <path d="M75 41L70 38L53 64L41 104L41 110L61 68Z" fill="#c4c4c4" stroke="#6d6d6d" strokeWidth=".8" />
    <circle cx="56.500" cy="62" r="2" fill="#777" />
  </g>
);

const Trash = () => (
  <g>
    <path d="M18 26Q24 18 34 16L42 14L50 20L62 15L70 22L84 20L92 26L88 38H24Z" fill="#e5e5e5" />
    <path d="M28 20L40 18L36 32ZM54 30L60 18L72 28ZM74 24L84 26L78 34Z" fill="#5a5a60" />
    <path d="M40 22L48 24L44 34Z" fill="#2f93c8" /><path d="M46 30L52 26L50 36Z" fill="#d8622a" /><path d="M60 26L66 30L60 34Z" fill="#c23b3b" /><path d="M33 26L40 28L36 34Z" fill="#4a8a4c" />
    <path d="M18 26Q22 36 55 36T92 26L84 100Q82 109 55 109T27 100Z" fill="url(#bin)" />
    <ellipse cx="55" cy="27" rx="37" ry="9" fill="none" stroke="#f3f3f3" strokeWidth="1.500" opacity=".7" />
    <path d="M30 46L34 98M78 46L74 98" stroke="#fff" strokeWidth="4" opacity=".3" />
  </g>
);

function Gradients() {
  const g = (id, stops) => (
    <linearGradient id={id} key={id} x1="0" y1="0" x2="0" y2="1">
      {stops.map((c, i) => (
        <stop key={i} offset={i / (stops.length - 1)} stopColor={c} />
      ))}
    </linearGradient>
  );
  return (
    <defs>
      {g("finder", ["#1ad5fd", "#1d70f2"])}
      {g("finderR", ["#f8f9fb", "#dce8f4"])}
      {g("outlook", ["#1583d8", "#0364b8"])}
      {g("note", ["#ffe14b", "#fcc40b"])}
      {g("atom", ["#b0e294", "#5ec58a", "#05a477"])}
      {g("navy", ["#1c4476", "#03122b"])}
      {g("orangeV", ["#fdbb3b", "#fb8523"])}
      {g("silver", ["#ffffff", "#dcdee2"])}
      {g("store", ["#18c8fb", "#1d62f0"])}
      {g("prefs", ["#cfdde6", "#9a9da0", "#6c6e71"])}
      {g("facet", ["#fedf57", "#fff0ae"])}
      {g("sky", ["#7da8ee", "#b4d0fa"])}
      {g("loupe", ["#d5d5d5", "#6e6e6e"])}
      {g("drop", ["#7be0fb", "#5cb2fb", "#2f6cf6"])}
      {g("cap", ["#8c9096", "#dcdee1", "#92969c"])}
      {g("check", ["#f7cf2a", "#dd9f0c"])}
      {g("hyper", ["#fb1fb4", "#fb4a70", "#fdb605"])}
      {g("xcode", ["#4fb9f8", "#1285f8"])}
      {g("steel", ["#f2f7fa", "#8fa6b4", "#e6eef2"])}
      {g("carton", ["#d8bb9d", "#c19a6c"])}
      {g("bin", ["#d9d7d6", "#c9c7c6", "#e9e9e9"])}
      <radialGradient id="glow">
        <stop offset="0" stopColor="#b4ccff" stopOpacity=".7" />
        <stop offset="1" stopColor="#b4ccff" stopOpacity="0" />
      </radialGradient>
      <filter id="sand" x="0" y="0" width="100%" height="100%" colorInterpolationFilters="sRGB">
        <feTurbulence type="fractalNoise" baseFrequency="0.4" numOctaves="2" seed="4" />
        <feColorMatrix values="2.600 0 0 0 -0.8  2.200 0 0 0 -0.8  1.500 0 0 0 -0.6  0 0 0 0 1" />
      </filter>
      <filter id="rock" x="0" y="0" width="100%" height="100%" colorInterpolationFilters="sRGB">
        <feTurbulence type="fractalNoise" baseFrequency="0.03 0.07" numOctaves="5" seed="23" />
        <feColorMatrix values="1.700 0 0 0 -0.52  1.450 0 0 0 -0.46  0.850 0 0 0 -0.28  0 0 0 0 1" />
      </filter>
    </defs>
  );
}

const dock = [
  [<Finder />, 1],
  [<Chrome />, 1],
  [<Outlook />],
  [<Notes />],
  [<Atom />, 1],
  [<Toolbox />],
  [<AppStore />],
  [<Prefs />],
  [<Sketch />, 1],
  [<Adobe x={9} label="Ai" c="#ff9a00" bg="#2e1a05" />],
  [<Adobe x={8} label="Ps" c="#00c8ff" bg="#04232e" />, 1],
  [<Preview />],
  [<Drop />],
  [<Tower />],
  [<Hyper />, 1],
  [<Truck />],
  [<Xcode />, 1],
  [<Terminal />, 1],
  [<AppBox />, 1],
  [<Grab />, 1],
];

const ink = "#273238";

function StatusIcons() {
  return (
    <StatusArea>
      <StatusSlot $w={32} $gap={0}>
        <svg width="32" height="44">
          <path d="M5 6H15V12H0ZM17 6H27L32 12H17Z" fill={ink} />
          <rect y="14" width="32" height="22" fill="#000" />
          <text x="16" y="30.500" textAnchor="middle" fontFamily="Inter" fontSize="15.500" fill="#b9c6cc">3x</text>
        </svg>
      </StatusSlot>
      <StatusSlot $w={34} $gap={19}>
        <svg width="34" height="44">
          <rect x="1" y="7" width="32" height="30" rx="2" fill="none" stroke={ink} strokeWidth="2" />
          <path d="M0 8Q0 6 2 6H32Q34 6 34 8V16H0Z" fill={ink} />
          <text x="17" y="34" textAnchor="middle" fontFamily="Noto Sans" fontWeight="500" fontSize="22" textLength="23" fill={ink}>19</text>
        </svg>
      </StatusSlot>
      <StatusSlot $w={37} $gap={33}>
        <svg width="37" height="44" fill="none" stroke={ink} strokeWidth="2.200">
          <path d="M6 19A15 15 0 1 1 9 32" />
          <path d="M20.500 13V23L25 27" />
          <path d="M0 20H11L6 26.500Z" fill={ink} stroke="none" />
        </svg>
      </StatusSlot>
      <StatusSlot $w={41} $gap={32}>
        <svg width="41" height="44" fill="none" stroke={ink} strokeWidth="2.200">
          <path d="M0 15Q20 0 40 15L20 36Z" fill="#b9c6ca" stroke="none" />
          <path d="M13 25C6 24 3 19 5 15C7 10 13 10 18 12C24 14 28 19 26 23C25 26 20 27 17 25" />
          <path d="M24 17C17 14 12 19 12 23C13 28 19 31 26 31C33 31 36 28 35 24C34 19 28 16 24 17C20 18 18 22 21 25" />
        </svg>
      </StatusSlot>
      <StatusSlot $w={36} $gap={24}>
        <svg width="36" height="44">
          <path d="M9 27H1V9H35V27H27" fill="none" stroke={ink} strokeWidth="2" />
          <path d="M18 23L29 36H7Z" fill={ink} />
        </svg>
      </StatusSlot>
      <StatusSlot $w={54} $gap={26.5}>
        <Battery>27 %</Battery>
      </StatusSlot>
      <StatusSlot $w={46} $gap={8}>
        <svg width="46" height="44">
          <rect x="1" y="11" width="38" height="22" rx="4" fill="none" stroke={ink} strokeWidth="2" />
          <rect x="4" y="14" width="8" height="16" fill={ink} />
          <path d="M42 17Q46 19 45.500 22T42 27Z" fill={ink} />
        </svg>
      </StatusSlot>
      <StatusSlot $w={122} $gap={33}>
        <Clock>11:55:17</Clock>
      </StatusSlot>
      <StatusSlot $w={29} $gap={38}>
        <svg width="29" height="44" fill="none" stroke={ink}>
          <circle cx="11" cy="19" r="9.500" strokeWidth="2.400" />
          <path d="M17.500 26L28 36" strokeWidth="3" />
        </svg>
      </StatusSlot>
      <StatusSlot $w={36} $gap={31.5}>
        <svg width="36" height="44" stroke={ink} strokeWidth="3.500">
          <path d="M0 13.700H4M8 13.700H36M0 22H4M8 22H30M0 30.300H4M8 30.300H36" />
        </svg>
      </StatusSlot>
    </StatusArea>
  );
}

function ProjectWindow() {
  return (
    <Window $x={2} $w={2558}>
      <TitleBar>
        <Lights><Light /><Light /><Light /></Lights>
        <PaneToggle>
          <svg width="50" height="30" fill="none" stroke="#9d9d9d">
            <rect x="1" y="1" width="48" height="27" strokeWidth="2" />
            <path d="M43 4V25" strokeWidth="4" />
          </svg>
        </PaneToggle>
      </TitleBar>
      <Body>
        <Navigator>
          <NavTabs $h={48} $line="#d6d6d6" />
          <NavTabs $h={58} $line="#b9b9b9">
            <svg width="30" height="26" fill="none" stroke="#7fb0f2" strokeWidth="3">
              <path d="M1.500 24.500V1.500H13L15 4H28.500V24.500ZM1.500 9H28.500" />
            </svg>
          </NavTabs>
          <Tree>
            <TreeRow>
              <TriDown ml={11} />
              <ProjectBadge>
                <ArchiveDoc id="proj" w={22} h={30} top="#45b4f5" bottom="#0a78ee" />
              </ProjectBadge>
            </TreeRow>
            {[0, 1, 2, 3, 4].map((i) => <TreeRow key={i}><FileStub /></TreeRow>)}
            <TreeRow><TriDown ml={39} /><Folder ml={8} /></TreeRow>
            {[0, 1, 2, 3].map((i) => <TreeRow key={i} />)}
            <TreeRow $selected />
            <TreeRow /><TreeRow />
            {[0, 1, 2].map((i) => <TreeRow key={i}><TriRight /><Folder ml={8} /></TreeRow>)}
          </Tree>
          <NavFooter>
            <Plus />
            <FilterStub><FilterGlyph /></FilterStub>
          </NavFooter>
        </Navigator>
        <Editor>
          <TabStrip><AddTab><Plus /></AddTab></TabStrip>
          <JumpBar>
            <svg width="84" height="26">
              <path d="M72 1Q73.500 1 74.500 3L83.500 22Q84 25 81.500 25H62.500Q60 25 60.500 22L69.500 3Q70.500 1 72 1Z" fill="#f4b70b" />
              <path d="M72 8V17M72 19.500V22" stroke="#fff" strokeWidth="2.600" />
            </svg>
            <svg width="13" height="26" fill="none" stroke="#9a9a9a" strokeWidth="2.200">
              <path d="M1 1.500L11.500 13L1 24.500" />
            </svg>
          </JumpBar>
          <SubBar />
          <EditorBody>
            <EditorRows><EditorRow /><EditorRow /><EditorRow /><EditorRow /></EditorRows>
            <Gutter><Thumb /></Gutter>
          </EditorBody>
        </Editor>
      </Body>
    </Window>
  );
}

function UploadSheet() {
  return (
    <Sheet>
      <SheetTitle>Archive upload process complete:</SheetTitle>
      <ResultPane>
        <svg width="178" height="178" viewBox="0 0 178 178">
          <circle cx="89" cy="89" r="82.500" fill="none" stroke="#5ab031" strokeWidth="11.500" />
          <path d="M43 77H71L83 98.500L120.500 41.500L135 56L83 137.500Z" fill="#5ab031" />
        </svg>
        <ResultTitle>Upload Successful</ResultTitle>
        <ResultText>Thank you for submitting your app to the iOS App Store.</ResultText>
      </ResultPane>
      <SheetButtons>
        <SheetButton $w={138} $lead>Cancel</SheetButton>
        <SheetButton $w={160}>Previous</SheetButton>
        <SheetButton $w={160}>Done</SheetButton>
      </SheetButtons>
    </Sheet>
  );
}

function OrganizerWindow() {
  return (
    <Window $x={76} $w={2400} $front>
      <TitleBar>
        <Lights><Light /><Light /><Light /></Lights>
        <Segmented>
          <Segment $on>Archives</Segment>
          <Segment>Crashes</Segment>
        </Segmented>
      </TitleBar>
      <Body>
        <SourceList>
          <SourceTitle>iOS Apps</SourceTitle>
          <SourceItem><ShelfIcon />InTheWallet</SourceItem>
        </SourceList>
        <List>
          <ListHeader>Name</ListHeader>
          {[0, 1, 2].map((i) => (
            <ListRow key={i} $selected={i === 0} $line={i === 1}>
              <ArchiveDoc id={`row${i}`} w={22} h={30} />InTheWallet
            </ListRow>
          ))}
          <ListFooter>
            <FilterField><FilterGlyph />Filter</FilterField>
            <Count>3 archives</Count>
          </ListFooter>
        </List>
        <Inspector>
          <InspectorTitle>Archive Information</InspectorTitle>
          <InspectorScroll>
            <Sections>
              <ArchiveCard>
                <ArchiveDoc id="card" w={44} h={60} fine />
                <div>
                  <ArchiveName>InTheWallet</ArchiveName>
                  <ArchiveDate>19 mai 2017 à 11:53</ArchiveDate>
                </div>
              </ArchiveCard>
              <Section $h={112} $pt={28}>
                <UploadButton>Upload to App Store…</UploadButton>
              </Section>
              <Section $h={92} $pt={28}>
                <ButtonRow>
                  <SmallButton>Validate…</SmallButton>
                  <SmallButton>Export…</SmallButton>
                </ButtonRow>
              </Section>
              <Section $h={220} $pt={31}>
                <Heading>Details</Heading>
                <Details>
                  <Term>Version</Term><Value>1.0 (1)</Value>
                  <Term>Identifier</Term><Value>org.reactjs.native.exampl…</Value>
                  <Term>Type</Term><Value>iOS App Archive</Value>
                </Details>
              </Section>
              <Section $h={92} $pt={28}>
                <SmallButton $inset $ls={-0.1}>Download dSYMs…</SmallButton>
              </Section>
              <Section $h={280} $pt={31}>
                <Heading>Description</Heading>
                <DescriptionBox>
                  <DescriptionText>No Description</DescriptionText>
                  <Track />
                </DescriptionBox>
              </Section>
            </Sections>
            <Track />
          </InspectorScroll>
        </Inspector>
      </Body>
      <UploadSheet />
    </Window>
  );
}

export default function App() {
  return (
    <Desktop>
      <Global />
      <Wallpaper width="2560" height="340">
        <Gradients />
        <rect width="2560" height="340" filter="url(#rock)" />
        <rect width="2560" height="340" fill="#2a1c0c" opacity=".25" />
        <rect x="0" width="3" height="200" fill="#2c2f3e" opacity=".5" />
      </Wallpaper>
      <MenuBar>
        <AppleIcon />
        <MenuItems>
          <MenuItem $bold>Capture</MenuItem>
          <MenuItem>Fichier</MenuItem>
          <MenuItem>Édition</MenuItem>
          <MenuItem>Capture</MenuItem>
          <MenuItem>Fenêtre</MenuItem>
          <MenuItem>Aide</MenuItem>
        </MenuItems>
        <StatusIcons />
      </MenuBar>
      <ProjectWindow />
      <OrganizerWindow />
      <DockBar>
        {dock.map(([icon, running], i) => (
          <DockIcon key={i} viewBox="0 0 110.2 134">
            {icon}
            {running ? <Dot /> : null}
          </DockIcon>
        ))}
        <Divider />
        <DockIcon viewBox="0 0 110.2 134"><Trash /></DockIcon>
      </DockBar>
    </Desktop>
  );
}
